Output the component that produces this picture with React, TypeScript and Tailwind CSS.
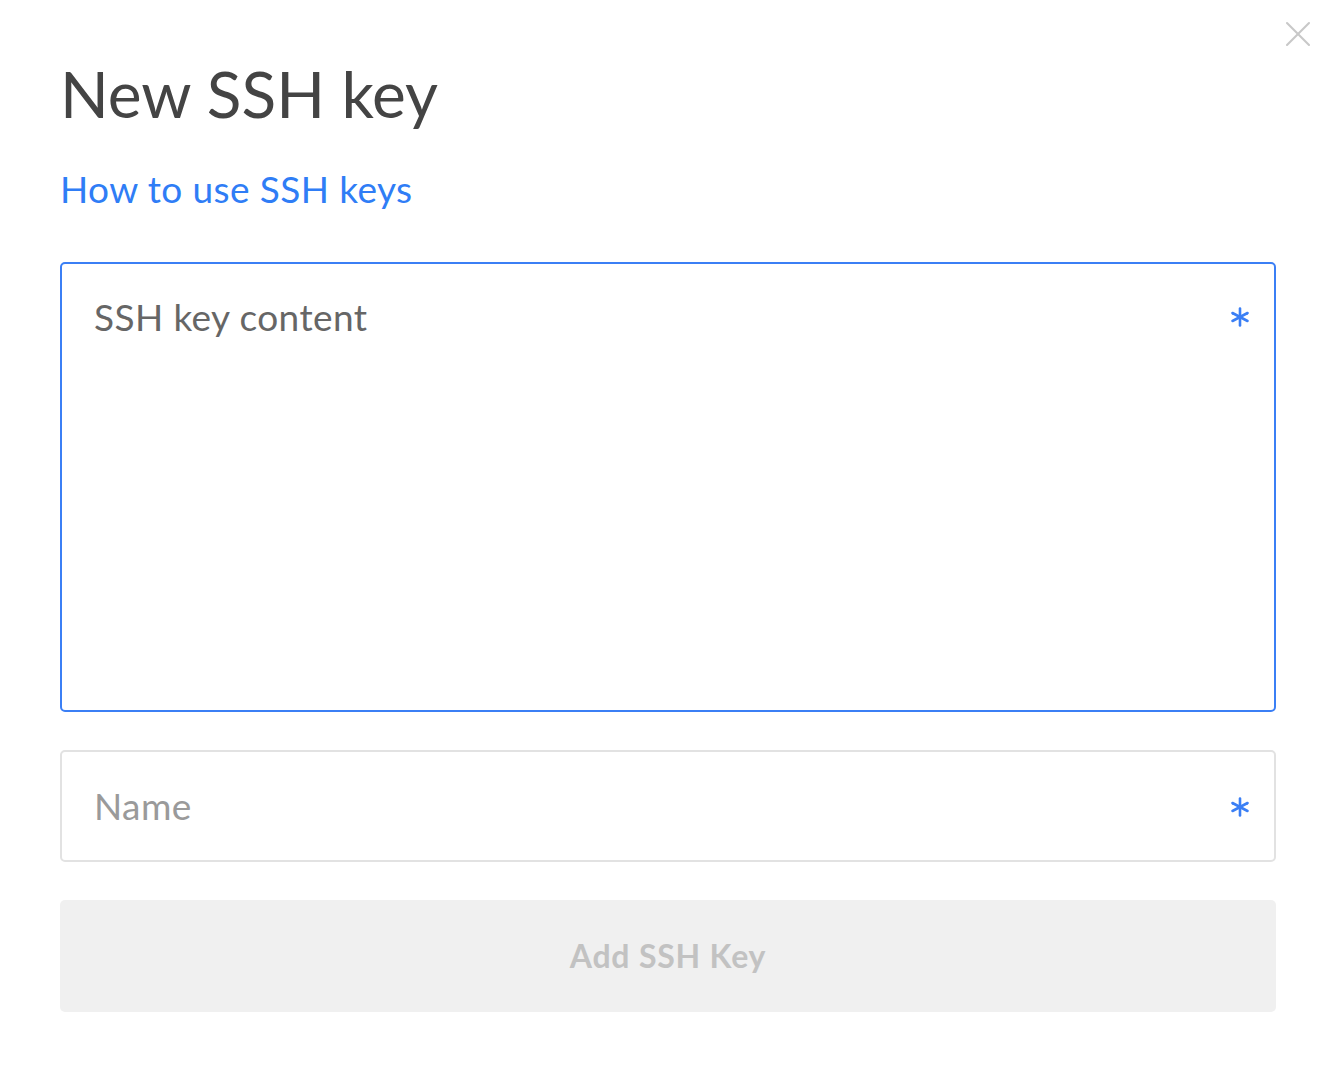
import { X } from "lucide-react";

export default function App() {
  return (
    <div
      className="relative w-[1324px] h-[1084px] bg-white"
      style={{ fontFamily: "Lato, 'Open Sans', sans-serif" }}
    >
      <button className="absolute top-[12px] right-[4px] text-[#c8c8c8]">
        <X size={44} strokeWidth={1.15} />
      </button>

      <div className="pl-[60px] pr-[48px] pt-[56px]">
        <h1 className="text-[64px] leading-[76px] text-[#444444]">New SSH key</h1>

        <a href="#" className="block mt-[35px] text-[37px] leading-[44px] tracking-[0.4px] text-[#2f7df6]">
          How to use SSH keys
        </a>

        <div className="mt-[51px] h-[450px] rounded-[5px] border-2 border-[#3b7ff5] flex items-start justify-between pl-[32px] pr-[24px] pt-[31px]">
          <span className="text-[37px] leading-[44px] tracking-[0.4px] text-[#666666]">SSH key content</span>
          <Star className="mt-[12px]" />
        </div>

        <div className="mt-[38px] h-[112px] rounded-[5px] border-2 border-[#e2e2e2] flex items-center justify-between pl-[32px] pr-[24px]">
          <span className="text-[37px] tracking-[0.4px] text-[#9a9a9a]">Name</span>
          <Star className="mt-[2px]" />
        </div>

        <button className="mt-[38px] w-full h-[112px] rounded-[5px] bg-[#f0f0f0] text-[32px] font-bold tracking-[0.8px] text-[#c2c2c2]">
          Add SSH Key
        </button>
      </div>
    </div>
  );
}

function Star({ className }: { className?: string }) {
  return (
    <svg width="20" height="20" viewBox="0 0 20 20" className={className} stroke="#3b7ff5" strokeWidth="2.6" strokeLinecap="round">
      <line x1="10" y1="1.5" x2="10" y2="18.5" />
      <line x1="2.5" y1="6" x2="17.5" y2="14" />
      <line x1="2.5" y1="14" x2="17.5" y2="6" />
    </svg>
  );
}
